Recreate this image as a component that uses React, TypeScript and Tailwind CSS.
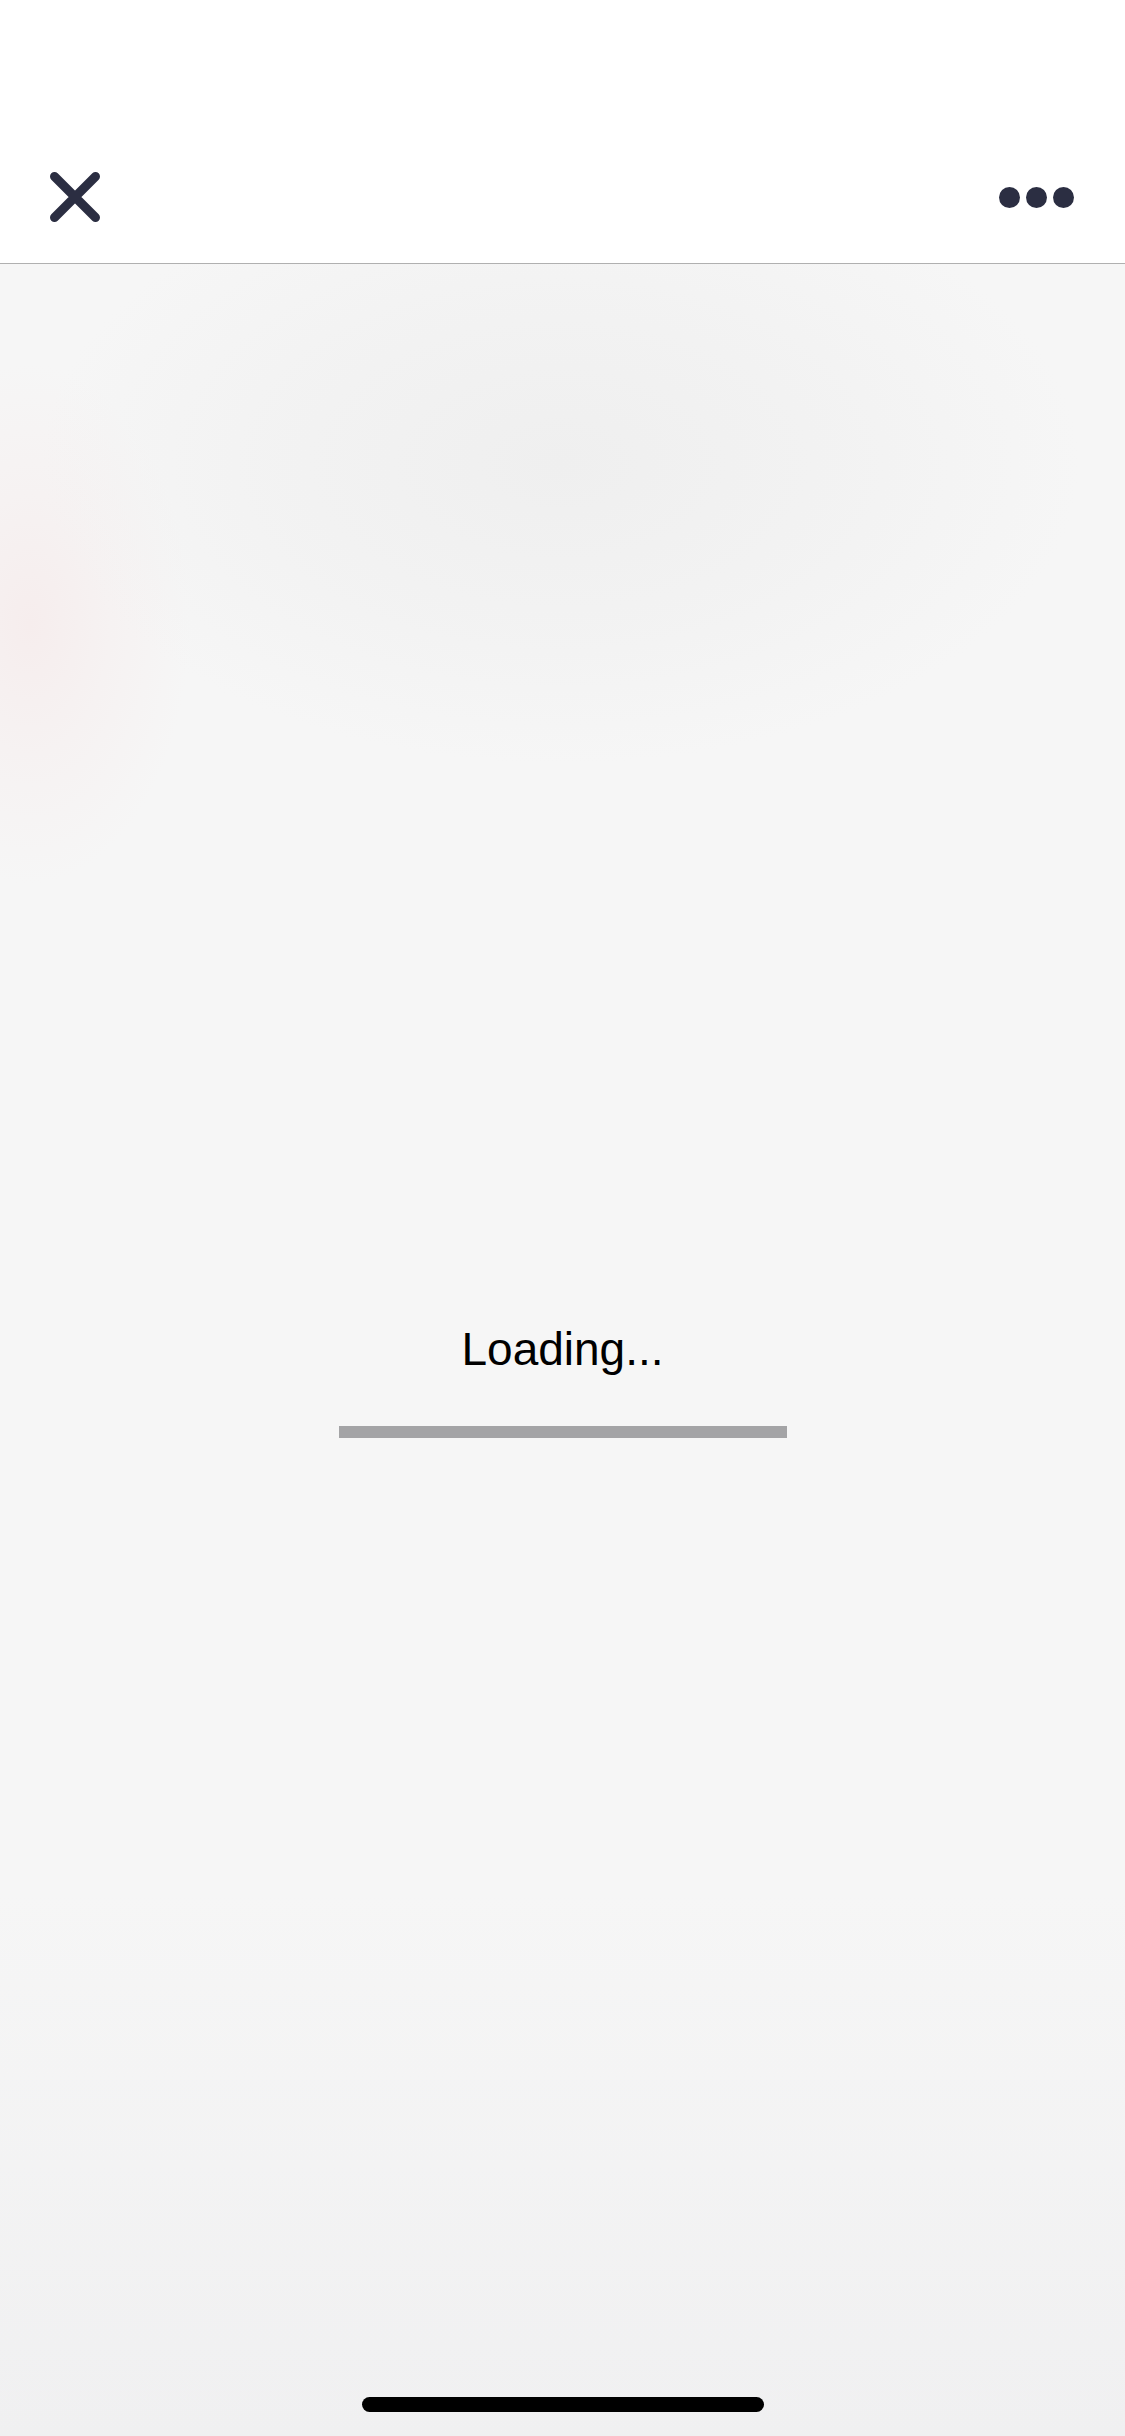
import React from 'react';

const CloseIcon: React.FC = () => (
  <svg className="w-[50px] h-[50px]" viewBox="0 0 50 50" fill="none">
    <path d="M4.5 4.5L45.5 45.5M45.5 4.5L4.5 45.5" stroke="#2b2e42" strokeWidth={9} strokeLinecap="round" />
  </svg>
);

const MoreIcon: React.FC = () => (
  <div className="flex items-center gap-[6px]">
    <span className="block w-[21px] h-[21px] rounded-full bg-[#2b2e42]" />
    <span className="block w-[21px] h-[21px] rounded-full bg-[#2b2e42]" />
    <span className="block w-[21px] h-[21px] rounded-full bg-[#2b2e42]" />
  </div>
);

const App: React.FC = () => {
  return (
    <div
      className="w-[1125px] h-[2436px] flex flex-col bg-white overflow-hidden"
      style={{ fontFamily: '"Liberation Sans", Arial, sans-serif' }}
    >
      {/* status bar space */}
      <div className="h-[131px] bg-white" />

      {/* top bar */}
      <div className="h-[133px] flex items-center justify-between pl-[50px] pr-[51px] bg-white border-b border-[#b0b0b0]">
        <CloseIcon />
        <MoreIcon />
      </div>

      {/* loading panel */}
      <div className="flex-1 flex flex-col items-center bg-[#f6f6f6] bg-[radial-gradient(ellipse_520px_300px_at_560px_200px,#efefef_0%,rgba(240,240,240,0.6)_55%,rgba(246,246,246,0)_100%),radial-gradient(ellipse_160px_260px_at_30px_360px,#f6eded_0%,rgba(246,238,238,0.5)_50%,rgba(246,246,246,0)_100%),linear-gradient(to_bottom,rgba(246,246,246,0)_75%,#f0f0f1_100%)]">
        <p className="mt-[1059px] text-[46px] leading-[52px] text-black">Loading...</p>
        <div className="mt-[51px] w-[448px] h-[12px] bg-[#a4a4a6]" />
        <div className="mt-auto mb-[24px] w-[402px] h-[15px] rounded-full bg-black" />
      </div>
    </div>
  );
};

export default App;
